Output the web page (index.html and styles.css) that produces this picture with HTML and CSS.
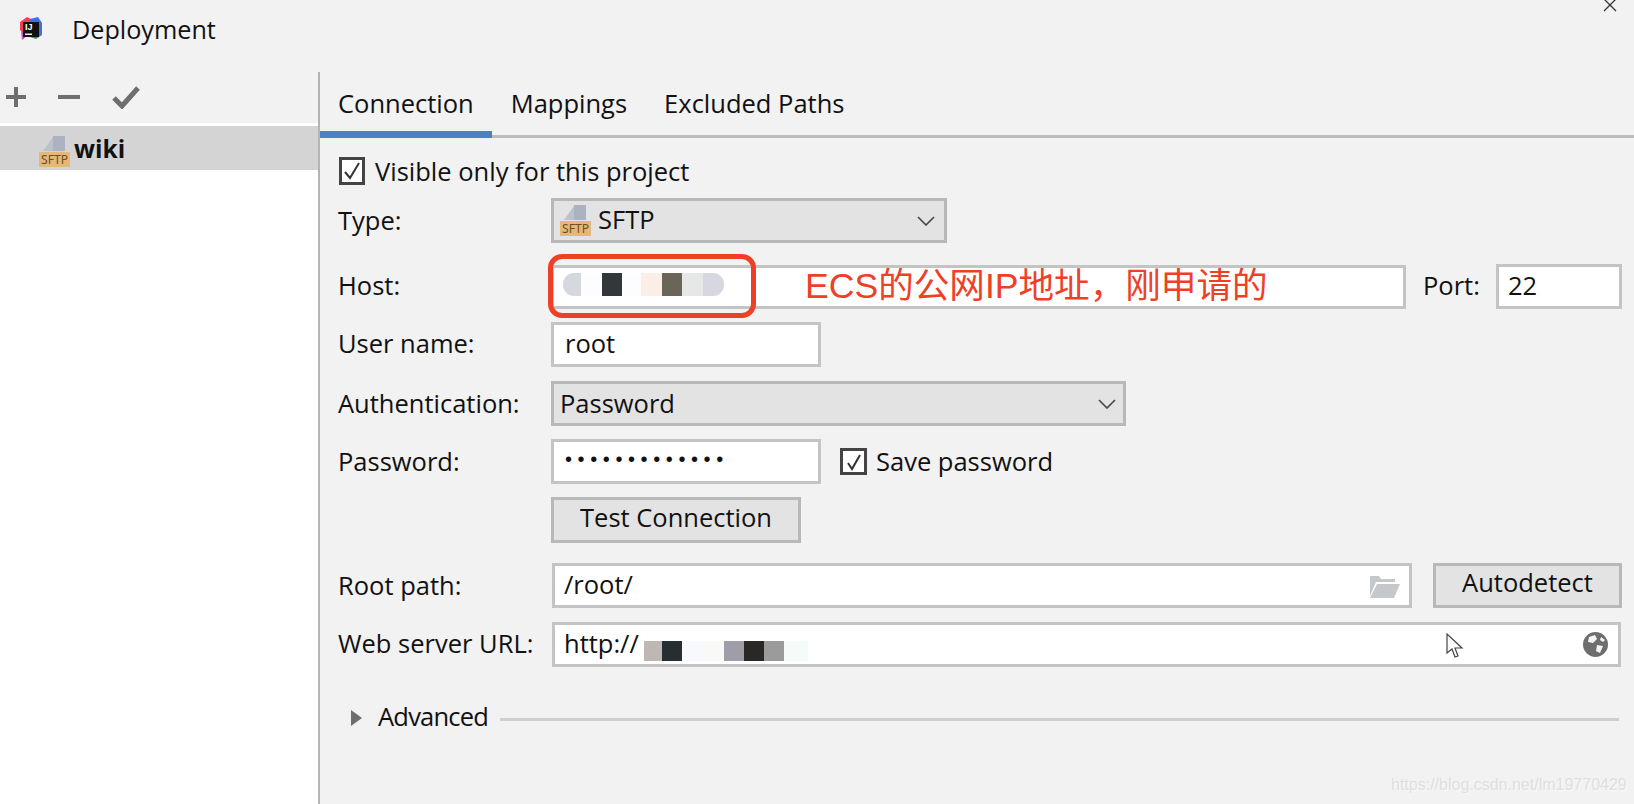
FILE: index.html
```html
<!DOCTYPE html>
<html lang="en">
<head>
  <meta charset="UTF-8">
  <title>Deployment</title>
  <link rel="stylesheet" href="styles.css">
</head>
<body>

<div class="titlebar">
  <svg class="logo" width="24" height="24" viewBox="0 0 24 24">
    <path d="M1 5 L8 0 L14 3 L12 8 L5 8 L4 16 L1 13 Z" fill="#ef3f56"/>
    <path d="M11 2 L19 0 L23 6 L23 18 L17 22 L11 20 Z" fill="#3f6fe0"/>
    <path d="M2 14 L8 19 L3 23 Z" fill="#c04fc0"/>
    <rect x="4" y="5" width="16" height="15" fill="#111"/>
    <text x="6" y="13" class="logo-text">IJ</text>
    <rect x="6" y="16.5" width="7" height="1.5" fill="#eee"/>
  </svg>
  <span class="title">Deployment</span>
  <svg class="close" width="14" height="14" viewBox="0 0 14 14">
    <path d="M1 1 L13 13 M13 1 L1 13" stroke="#333" stroke-width="1.3" fill="none"/>
  </svg>
</div>

<div class="main">
  <div class="sidebar">
    <div class="toolbar">
      <svg width="20" height="20" viewBox="0 0 20 20"><path d="M10 0 V20 M0 10 H20" stroke="#6e6e6e" stroke-width="4"/></svg>
      <svg width="22" height="20" viewBox="0 0 22 20"><path d="M0 10 H22" stroke="#6e6e6e" stroke-width="4"/></svg>
      <svg width="28" height="24" viewBox="0 0 28 24"><path d="M2 13 L10 21 L26 3" stroke="#6e6e6e" stroke-width="5" fill="none"/></svg>
    </div>
    <div class="tree">
      <div class="tree-row">
        <svg class="sftp" width="32" height="33" viewBox="0 0 32 33">
          <path d="M4 16 L14 2 V16 Z" fill="#bcc2ca"/>
          <path d="M14 1 H26 V16 H14 Z" fill="#aab3bf"/>
          <rect x="0" y="17" width="31" height="15" fill="#e6b877"/>
          <text x="15.5" y="29" textLength="27" lengthAdjust="spacingAndGlyphs" class="sftp-text">SFTP</text>
        </svg>
        <strong>wiki</strong>
      </div>
    </div>
  </div>

  <div class="panel">
    <div class="tabs">
      <div class="tab active">Connection</div>
      <div class="tab">Mappings</div>
      <div class="tab">Excluded Paths</div>
    </div>

    <div class="form">
      <div class="row row-visible">
        <span class="check"><svg width="20" height="22" viewBox="0 0 20 22"><path d="M3 12 L8 18 L17 3" stroke="#333" stroke-width="2" fill="none"/></svg></span>
        <span class="text">Visible only for this project</span>
      </div>

      <div class="row row-type">
        <label>Type:</label>
        <div class="select select-type">
          <svg class="sftp" width="32" height="33" viewBox="0 0 32 33">
            <path d="M4 16 L14 2 V16 Z" fill="#bcc2ca"/>
            <path d="M14 1 H26 V16 H14 Z" fill="#aab3bf"/>
            <rect x="0" y="17" width="31" height="15" fill="#e6b877"/>
            <text x="15.5" y="29" textLength="27" lengthAdjust="spacingAndGlyphs" class="sftp-text">SFTP</text>
          </svg>
          <span>SFTP</span>
          <svg class="chevron" width="18" height="10" viewBox="0 0 18 10"><path d="M1 1 L9 9 L17 1" stroke="#444" stroke-width="1.6" fill="none"/></svg>
        </div>
      </div>

      <div class="row row-host">
        <label>Host:</label>
        <div class="input input-host">
          <div class="mask mask-host">
            <i style="width:18px;background:#d5d8dc"></i><i style="width:21px;background:#fdfdff"></i><i style="width:20px;background:#34373a"></i><i style="width:19px;background:#fdfdff"></i><i style="width:21px;background:#fbeee6"></i><i style="width:20px;background:#696557"></i><i style="width:21px;background:#e6e7e7"></i><i style="width:21px;background:#d6d7e1"></i>
          </div>
          <div class="callout"></div>
          <span class="note">ECS的公网IP地址，刚申请的</span>
        </div>
        <label class="port-label">Port:</label>
        <div class="input input-port">22</div>
      </div>

      <div class="row row-user">
        <label>User name:</label>
        <div class="input input-short">root</div>
      </div>

      <div class="row row-auth">
        <label>Authentication:</label>
        <div class="select select-auth">
          <span>Password</span>
          <svg class="chevron" width="18" height="10" viewBox="0 0 18 10"><path d="M1 1 L9 9 L17 1" stroke="#444" stroke-width="1.6" fill="none"/></svg>
        </div>
      </div>

      <div class="row row-pass">
        <label>Password:</label>
        <div class="input input-short dots">•••••••••••••</div>
        <span class="check check-small"><svg width="18" height="20" viewBox="0 0 18 20"><path d="M3 11 L7 17 L15 3" stroke="#333" stroke-width="2" fill="none"/></svg></span>
        <span class="text">Save password</span>
      </div>

      <div class="row row-test">
        <label></label>
        <button class="btn btn-test">Test Connection</button>
      </div>

      <div class="row row-root">
        <label>Root path:</label>
        <div class="input input-root">
          <span>/root/</span>
          <svg class="folder" width="31" height="22" viewBox="0 0 31 22">
            <path d="M1 0 H10 L12 3 H26 V6 H7 L1 20 Z" fill="#c5c8ca"/>
            <path d="M8 8 H31 L25 22 H1 Z" fill="#c5c8ca"/>
          </svg>
        </div>
        <button class="btn btn-auto">Autodetect</button>
      </div>

      <div class="row row-web">
        <label>Web server URL:</label>
        <div class="input input-web">
          <span>http://</span>
          <div class="mask mask-web">
            <i style="width:18px;background:#bdb8b4"></i><i style="width:20px;background:#272e31"></i><i style="width:22px;background:#f8f9fd"></i><i style="width:20px;background:#f9f9f7"></i><i style="width:20px;background:#9f9ea8"></i><i style="width:20px;background:#2a2727"></i><i style="width:20px;background:#9b9b9b"></i><i style="width:24px;background:#f5fbf9"></i>
          </div>
          <svg class="globe" width="25" height="25" viewBox="0 0 25 25">
            <circle cx="12.5" cy="12.5" r="12.5" fill="#6e6e6e"/>
            <path d="M6 5 L12 3 L14 7 L10 11 L5 10 Z M14 13 L20 14 L17 21 L13 19 Z M18 5 L22 8 L20 10 L17 8 Z" fill="#f4f4f4"/>
          </svg>
        </div>
      </div>

      <div class="row row-adv">
        <span class="arrow"></span>
        <span class="text adv-text">Advanced</span>
        <span class="adv-line"></span>
      </div>
    </div>
  </div>
</div>

<svg class="cursor" width="18" height="26" viewBox="0 0 18 26">
  <path d="M1 1 V20 L6 16 L9 24 L12 23 L9 15 L16 15 Z" fill="#fff" stroke="#444" stroke-width="1.2"/>
</svg>
<div class="watermark">https://blog.csdn.net/lm19770429</div>

</body>
</html>
```

FILE: styles.css
```css
* { box-sizing: border-box; margin: 0; padding: 0; }

html, body {
  height: 804px;
  overflow: hidden;
}

body {
  position: relative;
  background: #f2f2f2;
  color: #111;
  font-family: "Open Sans", "Noto Sans", sans-serif;
  font-size: 25.5px;
}

/* title bar */
.titlebar {
  height: 72px;
  display: flex;
  align-items: center;
  padding: 0 0 14px 19px;
  position: relative;
}
.logo-text {
  font-family: "Liberation Sans", sans-serif;
  font-size: 9px;
  font-weight: bold;
  fill: #fff;
}
.title {
  margin-left: 29px;
  font-size: 25.2px;
}
.close {
  position: absolute;
  top: -2px;
  right: 17px;
}

.main {
  display: flex;
  height: 732px;
}

/* left list */
.sidebar {
  width: 320px;
  flex: none;
  border-right: 2px solid #b4b4b4;
  display: flex;
  flex-direction: column;
}
.toolbar {
  height: 51px;
  display: flex;
  align-items: center;
  padding: 0 0 2px 6px;
  gap: 32px;
}
.tree {
  flex: 1;
  background: #fff;
  padding-top: 3px;
}
.tree-row {
  height: 44px;
  background: #d4d4d4;
  display: flex;
  align-items: center;
  padding: 6px 0 0 39px;
}
.tree-row strong {
  margin: 0 0 6px 3px;
  font-size: 24.5px;
}
.sftp-text {
  font-family: "Noto Sans", sans-serif;
  font-size: 13px;
  fill: #6b4f20;
  text-anchor: middle;
}

/* right side */
.panel {
  flex: 1;
}
.tabs {
  height: 66px;
  display: flex;
  border-bottom: 3px solid #bcbcbc;
}
.tab {
  padding: 14px 18px 0;
  height: 66px;
}
.tab + .tab {
  margin-left: 1px;
}
.tab.active {
  border-bottom: 7px solid #4f80c6;
}

.form {
  padding: 0 12px 0 19px;
}
.row {
  display: flex;
  align-items: center;
}
.row label {
  width: 213px;
  margin-left: -1px;
  flex: none;
  padding-bottom: 4px;
}
.text {
  padding-bottom: 4px;
}
.row-visible { margin-top: 19px; height: 28px; }
.row-visible .text { padding-bottom: 0; }
.row-type { margin-top: 13px; }
.row-type label { padding-bottom: 2px; }
.row-host { margin-top: 21px; }
.row-user { margin-top: 13px; }
.row-auth { margin-top: 14px; }
.row-auth label { padding-bottom: 2px; }
.row-pass { margin-top: 13px; }
.row-pass label, .row-pass .text { padding-bottom: 1px; }
.row-test { margin-top: 13px; }
.row-root { margin-top: 20px; }
.row-root label, .input-root { padding-bottom: 1px; }
.row-root label, .row-web label { width: 214px; }
.row-web { margin-top: 14px; }
.row-web label { padding-bottom: 3px; }
.row-adv { margin-top: 36px; height: 30px; padding-left: 12px; }

.check {
  width: 26px;
  height: 28px;
  border: 3px solid #444;
  background: #fff;
  display: flex;
  align-items: center;
  justify-content: center;
  margin-right: 10px;
  flex: none;
}
.check-small {
  width: 27px;
  height: 27px;
  margin: 0 9px 0 19px;
}

.input, .select, .btn {
  height: 45px;
  display: flex;
  align-items: center;
  font: inherit;
  color: inherit;
  padding-bottom: 4px;
}
.input {
  background: #fff;
  border: 3px solid #c4c4c4;
  padding-left: 10px;
  padding-right: 10px;
  position: relative;
}
.select {
  background: #e3e3e3;
  border: 3px solid #b8b8b8;
  padding-left: 6px;
  padding-right: 6px;
  position: relative;
}
.chevron {
  position: absolute;
  right: 9px;
  top: 15px;
}
.select-type { width: 396px; padding-bottom: 0; }
.select-type .sftp { margin: 0 6px 0 0; }
.select-type span { padding-bottom: 4px; }
.select-auth { width: 575px; padding-bottom: 2px; }
.select-auth .chevron { right: 7px; }

.input-host { width: 855px; height: 44px; }
.input-port { width: 126px; height: 45px; margin-left: auto; padding-left: 9px; }
.row .port-label {
  width: auto;
  margin-left: 17px;
}
.input-short { width: 270px; padding-left: 11px; }
.dots {
  font-size: 20px;
  letter-spacing: 5.6px;
  font-family: "Liberation Sans", sans-serif;
}
.input-root { width: 860px; padding-left: 9px; }
.folder {
  position: absolute;
  right: 9px;
  top: 10px;
}
.btn {
  background: #e3e3e3;
  border: 3px solid #b8b8b8;
  justify-content: center;
  cursor: pointer;
  padding-bottom: 7px;
}
.btn-test { width: 250px; height: 46px; }
.btn-auto { width: 189px; margin-left: 21px; }
.input-web { width: 1069px; height: 45px; padding-left: 9px; }
.globe {
  position: absolute;
  right: 10px;
  top: 7px;
}

/* blurred out parts */
.mask {
  display: flex;
  height: 20px;
}
.mask i {
  display: block;
  height: 100%;
}
.mask-host {
  margin-left: -1px;
  height: 23px;
  border-radius: 11px;
  overflow: hidden;
}
.mask-web {
  margin-left: 5px;
  margin-top: 17px;
}

/* red annotation */
.callout {
  position: absolute;
  left: -6px;
  top: -14px;
  width: 208px;
  height: 64px;
  border: 5px solid #ee4026;
  border-radius: 14px;
}
.note {
  position: absolute;
  left: 251px;
  top: -3px;
  font-family: "Liberation Sans", "Noto Sans CJK SC", sans-serif;
  font-size: 35.6px;
  line-height: 42px;
  color: #ee4026;
  white-space: nowrap;
}

.arrow {
  width: 0;
  height: 0;
  border-left: 11px solid #6e6e6e;
  border-top: 8px solid transparent;
  border-bottom: 8px solid transparent;
  margin-right: 16px;
}
.adv-text {
  letter-spacing: -0.8px;
}
.adv-line {
  flex: 1;
  height: 3px;
  background: #cfcfcf;
  margin: 2px 3px 0 12px;
}

.cursor {
  position: absolute;
  left: 1446px;
  top: 633px;
}
.watermark {
  position: absolute;
  left: 1391px;
  top: 776px;
  font-family: "Liberation Sans", sans-serif;
  font-size: 16px;
  color: #dfdfdf;
  text-shadow: 1px 1px 1px #f9f9f9;
}
```
